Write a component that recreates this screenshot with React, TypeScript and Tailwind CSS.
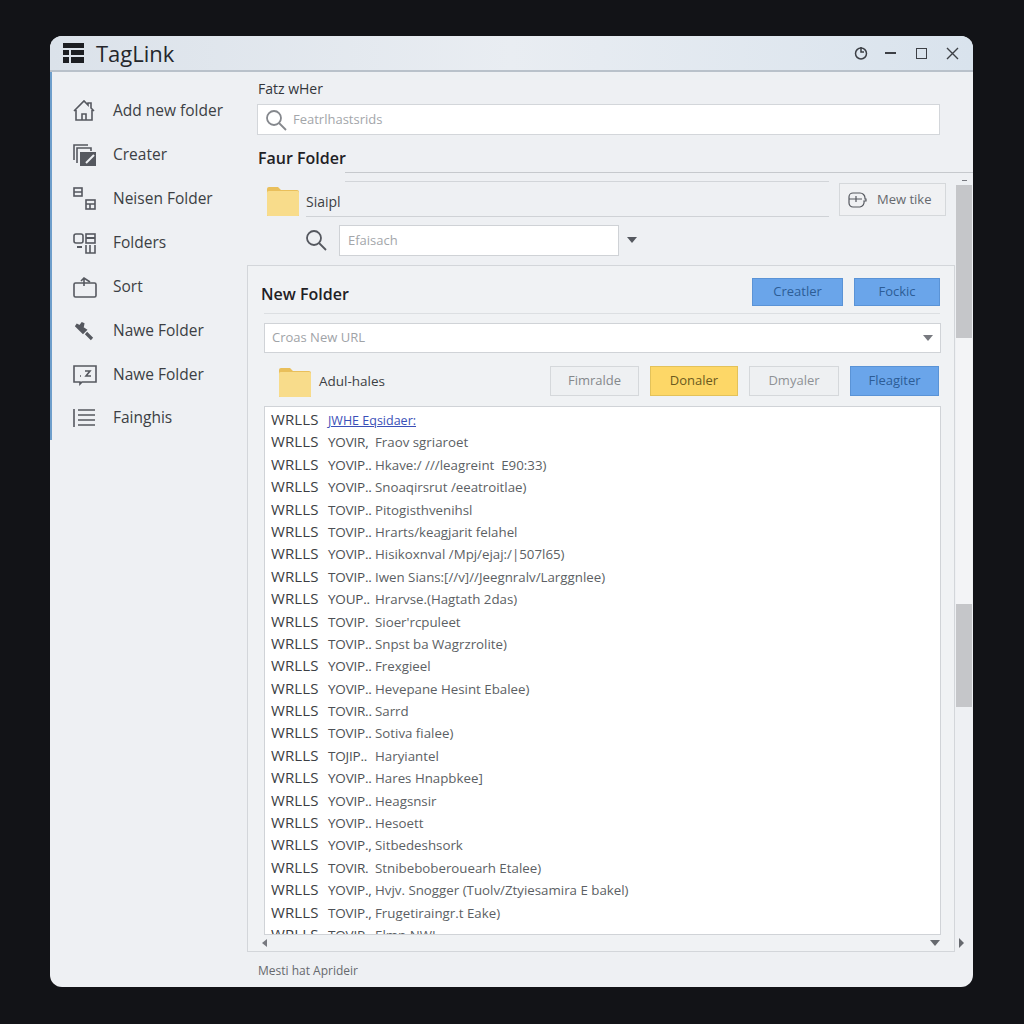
import React from "react";

const rows: [string, string][] = [
  ["YOVIR,", "Fraov sgriaroet"],
  ["YOVIP..", "Hkave:/ ///leagreint  E90:33)"],
  ["YOVIP..", "Snoaqirsrut /eeatroitlae)"],
  ["TOVIP..", "Pitogisthvenihsl"],
  ["TOVIP..", "Hrarts/keagjarit felahel"],
  ["YOVIP..", "Hisikoxnval /Mpj/ejaj:/|507l65)"],
  ["TOVIP..", "Iwen Sians:[//v]//Jeegnralv/Larggnlee)"],
  ["YOUP..", "Hrarvse.(Hagtath 2das)"],
  ["TOVIP.", "Sioer'rcpuleet"],
  ["TOVIP..", "Snpst ba Wagrzrolite)"],
  ["YOVIP..", "Frexgieel"],
  ["YOVIP..", "Hevepane Hesint Ebalee)"],
  ["TOVIR..", "Sarrd"],
  ["TOVIP..", "Sotiva fialee)"],
  ["TOJIP..", "Haryiantel"],
  ["YOVIP..", "Hares Hnapbkee]"],
  ["YOVIP..", "Heagsnsir"],
  ["YOVIP..", "Hesoett"],
  ["YOVIP.,", "Sitbedeshsork"],
  ["TOVIR.", "Stnibeboberouearh Etalee)"],
  ["YOVIP.,", "Hvjv. Snogger (Tuolv/Ztyiesamira E bakel)"],
  ["TOVIP.,", "Frugetiraingr.t Eake)"],
  ["TOVIP.", "Elmn NWI"],
];

const sideIcons: React.ReactNode[] = [
  <path key="a" d="M1 12 11 2l4 4V4h3v5l3 3M3 11v10h16V11M9 21v-6h4v6" />,
  <g key="b">
    <path d="M1 17V2h14" />
    <path d="M4 20V5h14v3" />
    <path d="M7 9h16v14H7z" fill="#55585f" stroke="none" />
    <path d="M13 20l8-8" stroke="#eef0f3" strokeWidth="2" />
  </g>,
  <g key="c">
    <rect x="1" y="1" width="8" height="8" />
    <path d="M1 5h8" />
    <rect x="13" y="13" width="9" height="9" />
    <path d="M13 17h9M17 17v5" />
  </g>,
  <g key="d">
    <rect x="1" y="3" width="9" height="9" rx="2" />
    <rect x="13" y="3" width="9" height="9" />
    <path d="M13 7h9M4 16h5" strokeWidth="2" />
    <path d="M13 14v8h9v-8M17 14v8" />
  </g>,
  <g key="e">
    <rect x="1" y="8" width="22" height="14" rx="1.5" />
    <path d="M11 11V4M8 6l3-3 6 4" />
  </g>,
  <path key="f" d="M3 7l4 2 3-4-1 5 3 2-2 2-3-3zM13 15l6 6" strokeWidth="3.2" />,
  <g key="g">
    <path d="M1 4h22v16H9l-2 2v-2H1z" />
    <path d="M12 9h5l-4 5h5M7 14h1" />
  </g>,
  <path key="h" d="M1 3v18M5 4h17M5 9h17M5 14h17M5 19h17" />,
];

const sideLabels = [
  "Add new folder",
  "Creater",
  "Neisen Folder",
  "Folders",
  "Sort",
  "Nawe Folder",
  "Nawe Folder",
  "Fainghis",
];

function FolderIcon() {
  return (
    <svg width="34" height="32" viewBox="0 0 34 32" className="shrink-0">
      <path d="M1 4a2 2 0 0 1 2-2h9l3 3h16a2 2 0 0 1 2 2v23a1 1 0 0 1-1 1H2a1 1 0 0 1-1-1z" fill="#e9bf5b" />
      <rect x="1" y="6" width="32" height="25" rx="1.5" fill="#f8dc8b" />
    </svg>
  );
}

function SearchIcon({ color }: { color: string }) {
  return (
    <svg width="22" height="22" viewBox="0 0 22 22" fill="none" stroke={color} strokeWidth="1.8" className="shrink-0">
      <circle cx="9" cy="9" r="7" />
      <path d="M14 14l7 7" />
    </svg>
  );
}

function Caret({ className }: { className: string }) {
  return <div className={`h-0 w-0 border-x-[5px] border-t-[6px] border-x-transparent ${className}`} />;
}

export default function App() {
  return (
    <div className="h-screen w-full bg-[#121317] pl-[50px] pt-[36px] font-['Open_Sans',sans-serif]">
      <div className="flex h-[951px] w-[923px] flex-col overflow-hidden rounded-[12px] bg-[#eef0f3]">
        {/* Title bar */}
        <div className="flex h-[36px] shrink-0 items-center border-b-2 border-[#b9c1ca] bg-gradient-to-r from-[#dbe2ea] via-[#e9edf2] to-[#d9e3ed] pl-[13px] pr-[14px]">
          <svg width="21" height="20" viewBox="0 0 21 20" className="mr-[12px] shrink-0" fill="#1c1e22">
            <rect x="0" y="0" width="21" height="5" />
            <rect x="0" y="7" width="6" height="5" />
            <rect x="8" y="7" width="13" height="5" />
            <rect x="0" y="14" width="6" height="6" />
            <rect x="8" y="14" width="13" height="6" />
          </svg>
          <span className="text-[22px] leading-none text-[#24262b]">TagLink</span>
          <div className="ml-auto flex items-center text-[#3d4046]">
            <svg width="14" height="14" viewBox="0 0 14 14" fill="none" stroke="currentColor" strokeWidth="1.5">
              <circle cx="7" cy="7.5" r="5.5" />
              <path d="M7 1v5h3" />
            </svg>
            <div className="ml-[17px] h-[2px] w-[11px] bg-[#3d4046]" />
            <div className="ml-[20px] h-[11px] w-[11px] border-[1.5px] border-[#3d4046]" />
            <svg width="13" height="13" viewBox="0 0 13 13" fill="none" stroke="currentColor" strokeWidth="1.4" className="ml-[19px]">
              <path d="M1 1l11 11M12 1 1 12" />
            </svg>
          </div>
        </div>

        <div className="flex min-h-0 flex-1">
          {/* Sidebar */}
          <div className="w-[197px] shrink-0">
            <div className="flex h-[368px] flex-col gap-[17.9px] border-l-2 border-[#6f9fcb] pl-[21px] pt-[26px]">
              {sideLabels.map((label, i) => (
                <div key={i} className="flex h-[26px] items-center gap-[16px]">
                  <svg width="24" height="24" viewBox="0 0 24 24" fill="none" stroke="#55585f" strokeWidth="1.6" className="shrink-0">
                    {sideIcons[i]}
                  </svg>
                  <span className="text-[15.5px] leading-none text-[#3c3f44]">{label}</span>
                </div>
              ))}
            </div>
          </div>

          {/* Main column */}
          <div className="flex min-w-0 flex-1 flex-col">
            <div className="h-[100px] shrink-0 pl-[10px] pr-[33px] pt-[8px]">
              <div className="ml-[1px] text-[14px] leading-[18px] text-[#33363b]">Fatz wHer</div>
              <div className="mt-[6px] flex h-[31px] items-center gap-[6px] border border-[#d3d6da] bg-white pl-[7px]">
                <SearchIcon color="#85888d" />
                <span className="text-[13px] text-[#a3a6aa]">Featrlhastsrids</span>
              </div>
              <div className="ml-[1px] mt-[13px] text-[16px] font-semibold leading-[20px] text-[#1f2125]">Faur Folder</div>
            </div>
            <div className="ml-[98px] h-0 border-t border-[#c6c9cd]" />

            <div className="flex min-h-0 flex-1">
              <div className="flex w-[708px] shrink-0 flex-col">
                {/* Folder row */}
                <div className="flex h-[44px] shrink-0 pl-[19px] pr-[9px] pt-[8px]">
                  <div className="mt-[4px]"><FolderIcon /></div>
                  <div className="ml-[6px] flex h-[36px] w-[524px] flex-col">
                    <div className="ml-[39px] h-0 border-t border-[#d2d5d9]" />
                    <div className="flex h-[36px] items-center border-b border-[#cfd2d6] pt-[5px] text-[14px] text-[#3c3f44]">Siaipl</div>
                  </div>
                  <div className="ml-[10px] mt-[2px] flex h-[33px] w-[107px] shrink-0 items-center gap-[10px] border border-[#d5d8db] bg-[#f0f1f3] pl-[8px] text-[13px] font-medium text-[#66696e]">
                    <svg width="19" height="18" viewBox="0 0 19 18" fill="none" stroke="#55585f" strokeWidth="1.2">
                      <path d="M5 2h7a5 5 0 0 1 5 5v1h1v2h-2a5 5 0 0 1-4 6H5a4 4 0 0 1-4-4V6a4 4 0 0 1 4-4z" />
                      <path d="M1 8h13M8 5v6" />
                    </svg>
                    Mew tike
                  </div>
                </div>

                {/* Search row */}
                <div className="flex h-[48px] shrink-0 items-start pl-[58px] pt-[8px]">
                  <div className="mt-[4px]"><SearchIcon color="#55585f" /></div>
                  <div className="ml-[12px] flex h-[31px] w-[280px] items-center border border-[#cfd2d6] bg-white pl-[8px] text-[13px] text-[#a3a6aa]">
                    Efaisach
                  </div>
                  <Caret className="ml-[8px] mt-[12px] border-t-[#55585f]" />
                </div>

                {/* Panel */}
                <div className="flex min-h-0 flex-1 flex-col border border-[#d3d6da] bg-[#f0f2f4] pl-[16px] pr-[14px]">
                  <div className="flex h-[48px] shrink-0 items-center justify-between border-b border-[#dcdfe2] pt-[5px]">
                    <span className="-ml-[3px] mt-[4px] text-[16px] font-semibold text-[#1f2125]">New Folder</span>
                    <div className="flex gap-[11px]">
                      <div className="flex h-[28px] w-[91px] items-center justify-center border border-[#5a93d6] bg-[#6aa5ea] text-[13px] text-[#2d5d96]">Creatler</div>
                      <div className="flex h-[28px] w-[86px] items-center justify-center border border-[#5a93d6] bg-[#6aa5ea] text-[13px] text-[#2d5d96]">Fockic</div>
                    </div>
                  </div>

                  <div className="mt-[9px] flex h-[30px] w-[677px] shrink-0 items-center justify-between border border-[#d0d3d7] bg-white pl-[7px] pr-[7px] text-[13px] text-[#a0a3a7]">
                    Croas New URL
                    <Caret className="border-t-[#77797f]" />
                  </div>

                  <div className="mt-[13px] flex h-[32px] w-[675px] shrink-0 items-center pl-[14px]">
                    <FolderIcon />
                    <span className="mb-[2px] ml-[7px] text-[13.5px] text-[#3c3f44]">Adul-hales</span>
                    <div className="ml-auto flex gap-[11px] self-start">
                      <div className="flex h-[30px] w-[89px] items-center justify-center border border-[#d5d8db] bg-[#eef0f2] text-[13px] text-[#85888c]">Fimralde</div>
                      <div className="flex h-[30px] w-[88px] items-center justify-center border border-[#e3c25a] bg-[#fdd767] text-[13px] text-[#6b5a20]">Donaler</div>
                      <div className="flex h-[30px] w-[90px] items-center justify-center border border-[#d5d8db] bg-[#eef0f2] text-[13px] text-[#8f9296]">Dmyaler</div>
                      <div className="flex h-[30px] w-[89px] items-center justify-center border border-[#5a93d6] bg-[#6aa5ea] text-[13px] text-[#2d5d96]">Fleagiter</div>
                    </div>
                  </div>

                  {/* List */}
                  <div className="mt-[8px] h-[529px] w-[677px] shrink-0 overflow-hidden border border-[#d0d3d7] bg-white pl-[6px] pt-[1px] leading-[22.4px]">
                    <div className="flex h-[22.4px] items-baseline">
                      <span className="w-[57px] shrink-0 text-[15px] tracking-[0.1px] text-[#3a3d42]">WRLLS</span>
                      <span className="text-[12.5px] text-[#3a50b8] underline">JWHE Eqsidaer:</span>
                    </div>
                    {rows.map(([code, text], i) => (
                      <div key={i} className="flex h-[22.4px] items-baseline">
                        <span className="w-[57px] shrink-0 text-[15px] tracking-[0.1px] text-[#3a3d42]">WRLLS</span>
                        <span className="w-[47px] shrink-0 text-[13.5px] tracking-[-0.2px] text-[#4c4f54]">{code}</span>
                        <span className="whitespace-pre text-[13.3px] text-[#5c5f64]">{text}</span>
                      </div>
                    ))}
                  </div>

                  <div className="-ml-[2px] flex flex-1 items-center justify-between">
                    <div className="h-0 w-0 border-y-[4px] border-r-[5px] border-y-transparent border-r-[#77797f]" />
                    <Caret className="border-t-[#66696e]" />
                  </div>
                </div>
              </div>

              {/* Scrollbar */}
              <div className="flex flex-1 flex-col pl-[1px] pr-[1px]">
                <div className="flex h-[12px] justify-center pt-[7px]">
                  <div className="h-[1px] w-[5px] bg-[#77797f]" />
                </div>
                <div className="h-[153px] bg-[#c5c6c9]" />
                <div className="h-[266px] bg-[#f3f4f6]" />
                <div className="h-[103px] bg-[#c5c6c9]" />
                <div className="flex flex-1 items-end pb-[4px] pl-[3px]">
                  <div className="h-0 w-0 border-y-[5px] border-l-[5px] border-y-transparent border-l-[#66696e]" />
                </div>
              </div>
            </div>
          </div>
        </div>

        {/* Status bar */}
        <div className="flex h-[35px] shrink-0 items-center pl-[208px] pt-[3px] text-[12px] text-[#66696e]">Mesti hat Aprideir</div>
      </div>
    </div>
  );
}
